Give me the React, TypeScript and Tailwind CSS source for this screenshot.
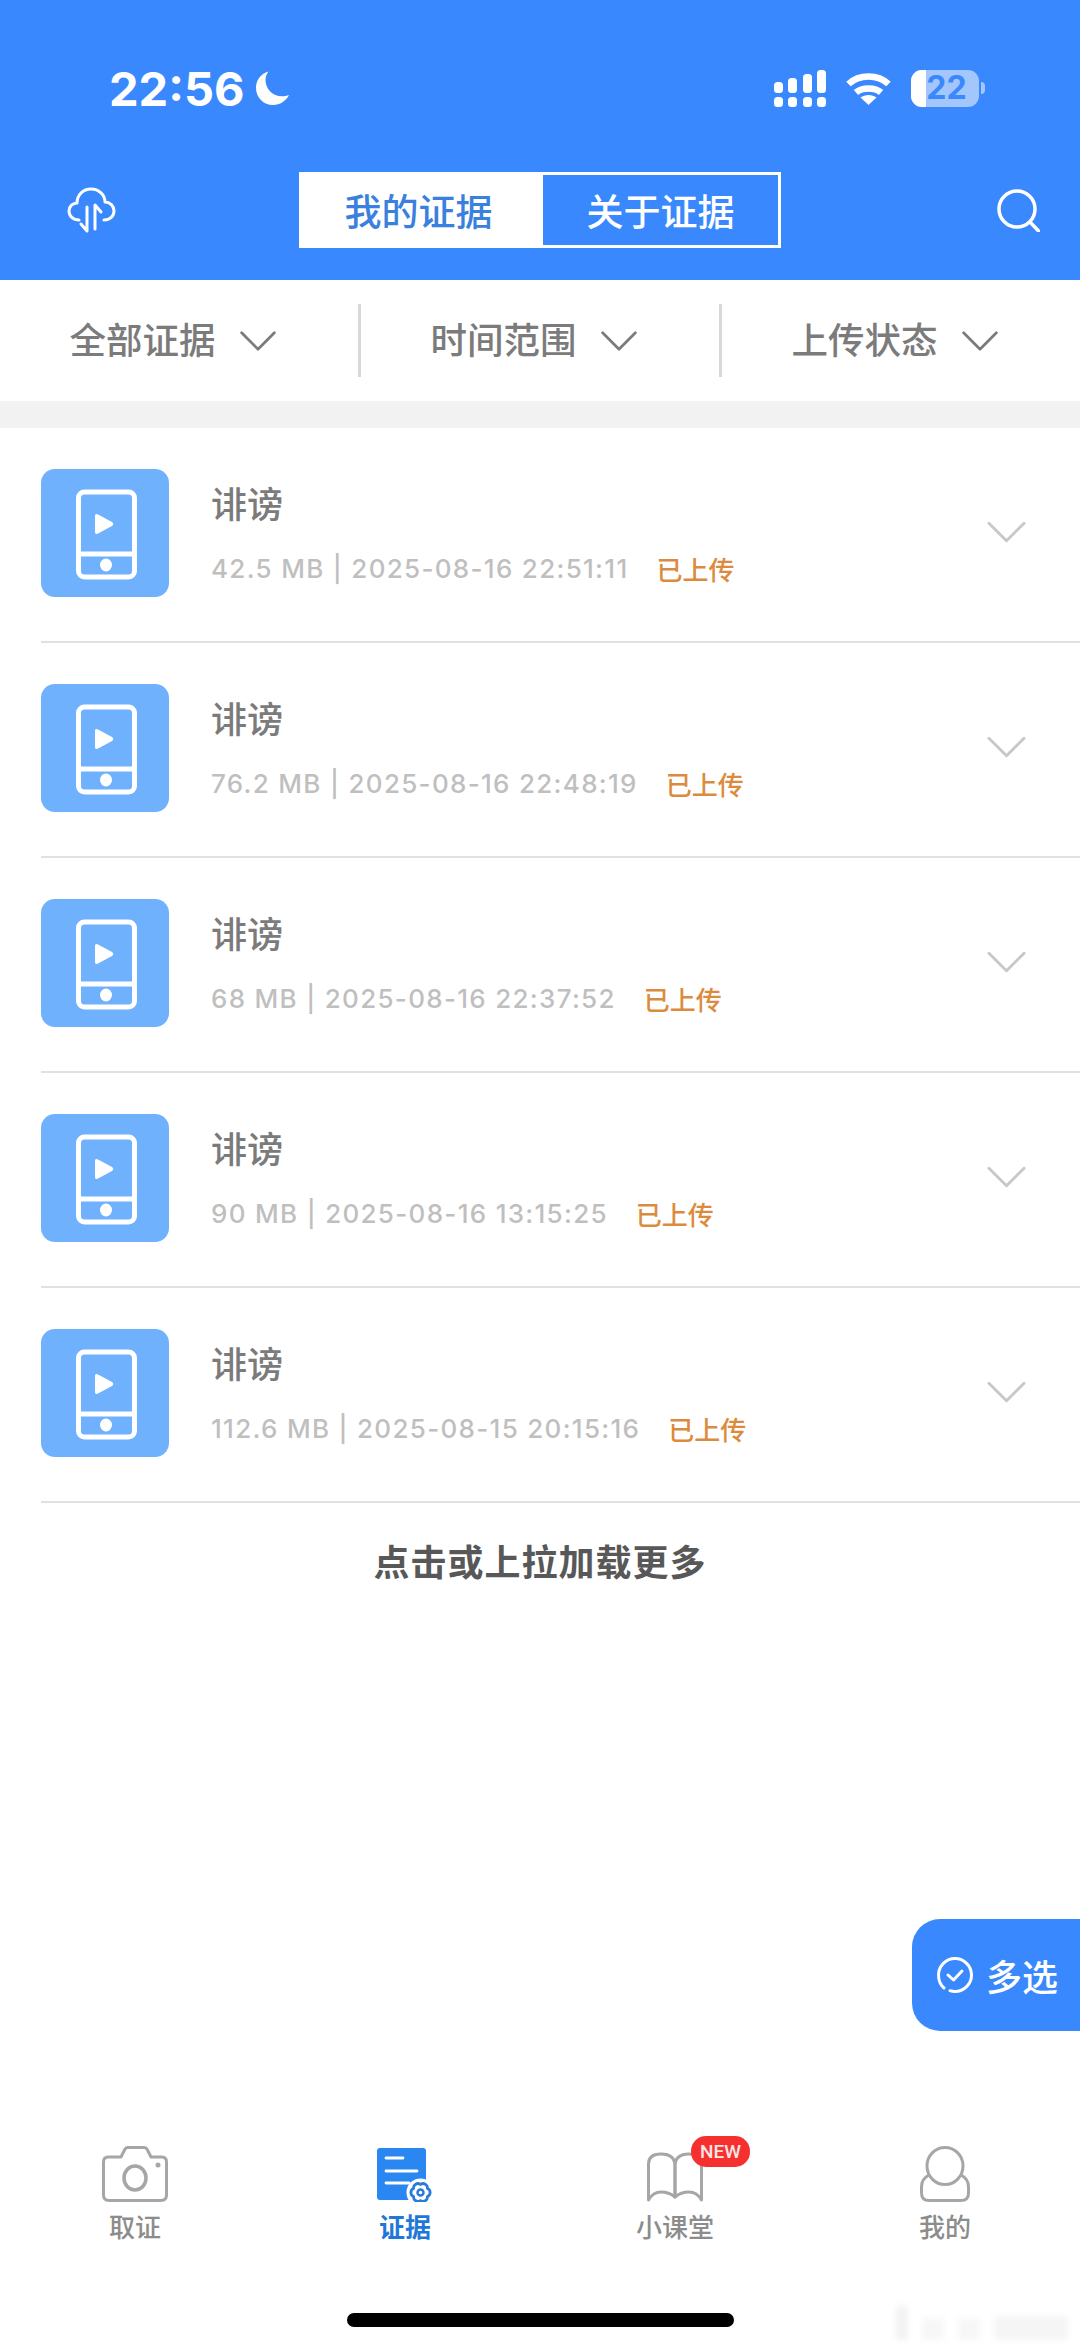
import React from 'react';

const cjk = { fontFamily: '"Noto Sans CJK SC", "Noto Sans", sans-serif' };

const rows = [
  { meta: '42.5 MB | 2025-08-16 22:51:11' },
  { meta: '76.2 MB | 2025-08-16 22:48:19' },
  { meta: '68 MB | 2025-08-16 22:37:52' },
  { meta: '90 MB | 2025-08-16 13:15:25' },
  { meta: '112.6 MB | 2025-08-15 20:15:16' },
];

const Chevron = ({ className }: { className: string }) => (
  <svg viewBox="0 0 40 22" fill="none" stroke="currentColor" strokeWidth="3" strokeLinecap="round" strokeLinejoin="round" className={className}>
    <path d="M2 2 L20 20 L38 2" />
  </svg>
);

const PhoneIcon = () => (
  <svg viewBox="0 0 128 128" className="w-[128px] h-[128px]" fill="none">
    <rect x="37.500" y="23" width="56" height="85" rx="6" stroke="#fff" strokeWidth="5" />
    <path d="M37 85 H94" stroke="#fff" strokeWidth="5" />
    <path d="M54 47 Q54 44 57 45.500 L71 53 Q73.500 55 71 57 L57 64.500 Q54 66 54 63 Z" fill="#fff" />
    <ellipse cx="65" cy="96" rx="6" ry="6.500" fill="#fff" />
  </svg>
);

const Signal = () => (
  <svg viewBox="0 0 52 37" className="w-[52px] h-[37px]" fill="#fff">
    <rect x="0" y="12" width="9" height="11" rx="3.500" />
    <rect x="14" y="8" width="9" height="15" rx="3.500" />
    <rect x="29" y="4" width="9" height="19" rx="3.500" />
    <rect x="43" y="0" width="9" height="23" rx="3.500" />
    <rect x="0" y="27" width="9" height="10" rx="3.500" />
    <rect x="14" y="27" width="9" height="10" rx="3.500" />
    <rect x="29" y="27" width="9" height="10" rx="3.500" />
    <rect x="43" y="27" width="9" height="10" rx="3.500" />
  </svg>
);

const Wifi = () => (
  <svg viewBox="0 0 45 33" className="w-[45px] h-[33px]" fill="none" stroke="#fff" strokeWidth="6.500">
    <path d="M2.500 12 C13 2 32 2 42.500 12" />
    <path d="M10 20.500 C16 15 29 15 35 20.500" />
    <path d="M22.500 33 L14.500 25.500 C19 22 26 22 30.500 25.500 Z" fill="#fff" stroke="none" />
  </svg>
);

const Battery = () => (
  <div className="flex items-center gap-[2px]">
    <div className="relative w-[68px] h-[37px] rounded-[11px] overflow-hidden bg-[#a3c6fc] flex items-center justify-center">
      <div className="absolute left-0 top-0 bottom-0 w-[15px] bg-white" />
      <span className="relative ml-[3px] text-[32px] font-bold leading-none text-[#3a88fe]" style={{ fontFamily: 'Inter, sans-serif' }}>22</span>
    </div>
    <div className="w-[4px] h-[12px] rounded-r-full bg-[#a3c6fc]" />
  </div>
);

const Moon = () => (
  <svg viewBox="0 0 33 34" className="w-[33px] h-[34px]" fill="#fff">
    <path d="M12.500 0.500 C5 2.500 0 9 0 17 C0 26.500 7.500 34 17 34 C24 34 30 30 33 24 C31 24.800 28.500 25.300 26 25.300 C16.500 25.300 9.500 18 9.500 9 C9.500 6 10.500 3 12.500 0.500 Z" />
  </svg>
);

const CloudIcon = () => (
  <svg viewBox="0 0 49 46" className="w-[49px] h-[46px]" fill="none" stroke="#fff" strokeWidth="3" strokeLinecap="round" strokeLinejoin="round">
    <path d="M12 33 C6 33 2 29 2 24 C2 19 6 16 10 16 C10 8 16 2 24 2 C32 2 38 8 38 15 C43 15 47 19 47 24 C47 29 43 33 37 33" />
    <path d="M20 20 V44 L14 37" />
    <path d="M28 42 V18 L34 25" />
  </svg>
);

const SearchIcon = () => (
  <svg viewBox="0 0 43 43" className="w-[43px] h-[43px]" fill="none" stroke="#fff" strokeWidth="3.500" strokeLinecap="round">
    <circle cx="20" cy="20" r="18" />
    <path d="M33 33 L41.500 42" />
  </svg>
);

const CameraIcon = () => (
  <svg viewBox="0 0 66 56" className="w-[66px] h-[56px]" fill="none" stroke="#a6a6a6" strokeWidth="3" strokeLinejoin="round">
    <path d="M6 11 H19 L23 3 Q24 1.500 26 1.500 H42 Q44 1.500 45 3 L49 11 H60 Q64.500 11 64.500 16 V49 Q64.500 54.500 59 54.500 H7 Q1.500 54.500 1.500 49 V16 Q1.500 11 6 11 Z" />
    <ellipse cx="33" cy="32" rx="11" ry="12" strokeWidth="3.500" />
    <circle cx="56" cy="19" r="2.500" fill="#a6a6a6" stroke="none" />
  </svg>
);

const DocIcon = () => (
  <svg viewBox="0 0 56 54" className="w-[56px] h-[54px]">
    <rect x="0" y="0" width="49" height="52" rx="3" fill="#2a86f0" />
    <circle cx="43.500" cy="44.500" r="14" fill="#fff" />
    <path d="M9 10 H26 M9 23 H40 M9 35 H32" stroke="#fff" strokeWidth="2.800" strokeLinecap="round" />
    <path d="M43.500 36.500 A4.300 4.300 0 0 1 50.400 40.500 A4.300 4.300 0 0 1 50.400 48.500 A4.300 4.300 0 0 1 43.500 52.500 A4.300 4.300 0 0 1 36.600 48.500 A4.300 4.300 0 0 1 36.600 40.500 A4.300 4.300 0 0 1 43.500 36.500 Z" fill="none" stroke="#2a7ad8" strokeWidth="2.800" strokeLinejoin="round" />
    <circle cx="43.500" cy="44.500" r="3" fill="none" stroke="#2a7ad8" strokeWidth="2.500" />
  </svg>
);

const BookIcon = () => (
  <svg viewBox="0 0 56 50" className="w-[56px] h-[50px]" fill="none" stroke="#a6a6a6" strokeWidth="3" strokeLinecap="round" strokeLinejoin="round">
    <path d="M1.500 48 V12 Q1.500 2 14 2 Q28 2 28 14 V45 Q22 40 14 40 Q6 40 1.500 48 Z" />
    <path d="M54.500 48 V12 Q54.500 2 42 2 Q28 2 28 14 V45 Q34 40 42 40 Q50 40 54.500 48 Z" />
  </svg>
);

const UserIcon = () => (
  <svg viewBox="0 0 50 56" className="w-[50px] h-[56px]" fill="none" stroke="#a6a6a6" strokeWidth="3">
    <ellipse cx="25" cy="20" rx="18" ry="18.500" />
    <path d="M9 29 C3 32 1.500 36 1.500 41 V47 Q1.500 54.500 9 54.500 H41 Q48.500 54.500 48.500 47 V41 C48.500 36 47 32 41 29" />
  </svg>
);

const MultiIcon = () => (
  <svg viewBox="0 0 36 36" className="w-[36px] h-[36px]" fill="none" stroke="#fff" strokeWidth="3" strokeLinecap="round" strokeLinejoin="round">
    <path d="M7 31 C3.500 28 1.500 23.500 1.500 18 C1.500 9 9 1.500 18 1.500 C27 1.500 34.500 9 34.500 18 C34.500 27 27 34.500 18 34.500 C16 34.500 14.500 34.200 13 33.700" />
    <path d="M11 18 L16.500 23 L25 14" />
  </svg>
);

const filters = ['全部证据', '时间范围', '上传状态'];

const tabs = [
  { label: '取证', icon: <CameraIcon />, active: false },
  { label: '证据', icon: <DocIcon />, active: true },
  { label: '小课堂', icon: <BookIcon />, active: false, badge: true },
  { label: '我的', icon: <UserIcon />, active: false },
];

export default function App() {
  return (
    <div className="relative w-[1080px] h-[2348px] bg-white flex flex-col overflow-hidden" style={cjk}>
      <header className="h-[280px] bg-[#3a88fe] flex flex-col shrink-0">
        <div className="mt-[68px] h-[40px] pl-[109px] pr-[95px] flex items-center justify-between">
          <div className="flex items-center gap-[12px]">
            <span className="text-[47px] font-bold leading-none text-white" style={{ fontFamily: 'Inter, sans-serif' }}>22:56</span>
            <Moon />
          </div>
          <div className="flex items-center">
            <Signal />
            <div className="ml-[20px] mr-[20px]"><Wifi /></div>
            <Battery />
          </div>
        </div>
        <div className="mt-[64px] px-[40px] grid grid-cols-[1fr_auto_1fr] items-center">
          <div className="pl-[27px]"><CloudIcon /></div>
          <div className="flex w-[482px] h-[76px] border-[3px] border-white">
            <div className="w-[241px] pr-[8px] bg-white flex items-center justify-center text-[37px] font-medium leading-none text-[#3a80de]">我的证据</div>
            <div className="flex-1 flex items-center justify-center text-[37px] font-medium leading-none text-white">关于证据</div>
          </div>
          <div className="flex justify-end"><SearchIcon /></div>
        </div>
      </header>

      <div className="h-[121px] flex items-center shrink-0">
        {filters.map((f, i) => (
          <div key={f} className={`flex-1 h-[73px] flex items-center justify-center gap-[23px] pr-[12px] ${i > 0 ? 'border-l-[3px] border-[#d8d8d8]' : ''}`}>
            <span className="-mt-[2px] text-[36.5px] font-medium leading-none text-[#7b7b7b]">{f}</span>
            <Chevron className="w-[38px] h-[20px] text-[#7b7b7b]" />
          </div>
        ))}
      </div>
      <div className="h-[27px] bg-[#f2f2f2] shrink-0" />

      <div className="flex flex-col">
        {rows.map(r => (
          <div key={r.meta} className="h-[215px] pl-[41px]">
            <div className="h-[215px] flex items-center border-b-2 border-[#e1e1e1] pr-[54px]">
              <div className="w-[128px] h-[128px] rounded-[14px] bg-[#70b1fe] shrink-0 -mt-[4px]"><PhoneIcon /></div>
              <div className="ml-[42px] -mt-[6px] flex-1 flex flex-col gap-[24px]">
                <div className="text-[36px] font-medium leading-[50px] text-[#7b7b7b]">诽谤</div>
                <div className="flex items-center leading-[36px]">
                  <span className="text-[26px] font-medium tracking-[1.3px] text-[#bfbfbf]" style={{ fontFamily: 'Inter, "Noto Sans CJK SC", sans-serif' }}>{r.meta}</span>
                  <span className="ml-[28px] text-[26px] font-medium text-[#dc8a3e]">已上传</span>
                </div>
              </div>
              <Chevron className="w-[39px] h-[22px] text-[#c8c8c8] shrink-0 -mt-[5px]" />
            </div>
          </div>
        ))}
      </div>

      <div className="mt-[32px] text-center text-[36px] leading-[50px] font-bold tracking-[1px] text-[#585858]">点击或上拉加载更多</div>

      <button className="absolute right-0 top-[1919px] w-[168px] h-[112px] bg-[#3a88fe] rounded-l-[28px] flex items-center pl-[25px] gap-[13px] text-white text-[36px] font-medium leading-none">
        <MultiIcon />
        <span>多选</span>
      </button>

      <nav className="mt-auto grid grid-cols-4">
        {tabs.map(t => (
          <div key={t.label} className="flex flex-col items-center">
            <div className="relative h-[58px] flex items-end justify-center">
              {t.icon}
              {t.badge && (
                <span className="absolute -top-[8px] left-[44px] w-[59px] h-[31px] rounded-[15px] bg-[#f5302f] flex items-center justify-center text-[19px] font-medium leading-none text-[#ffe4e4]" style={{ fontFamily: 'Roboto, sans-serif' }}>NEW</span>
              )}
            </div>
            <span className={`mt-[6px] text-[26px] leading-[36px] ${t.active ? 'text-[#1f78d8] font-bold' : 'text-[#8c8c8c] font-medium'}`}>{t.label}</span>
          </div>
        ))}
      </nav>

      <div className="mt-[69px] mb-[21px] flex justify-center">
        <div className="w-[387px] h-[14px] rounded-full bg-black" />
      </div>

      {/* faint leftover watermark, bottom right corner */}
      <div className="absolute left-[896px] top-[2306px] w-[172px] h-[34px] flex items-end gap-[14px] blur-[3px]">
        <div className="w-[12px] h-[34px] bg-[#f2f2f2]" />
        <div className="w-[22px] h-[22px] bg-[#f7f7f7]" />
        <div className="w-[22px] h-[22px] bg-[#f7f7f7]" />
        <div className="flex-1 h-[24px] bg-[#f5f5f5]" />
      </div>
    </div>
  );
}
